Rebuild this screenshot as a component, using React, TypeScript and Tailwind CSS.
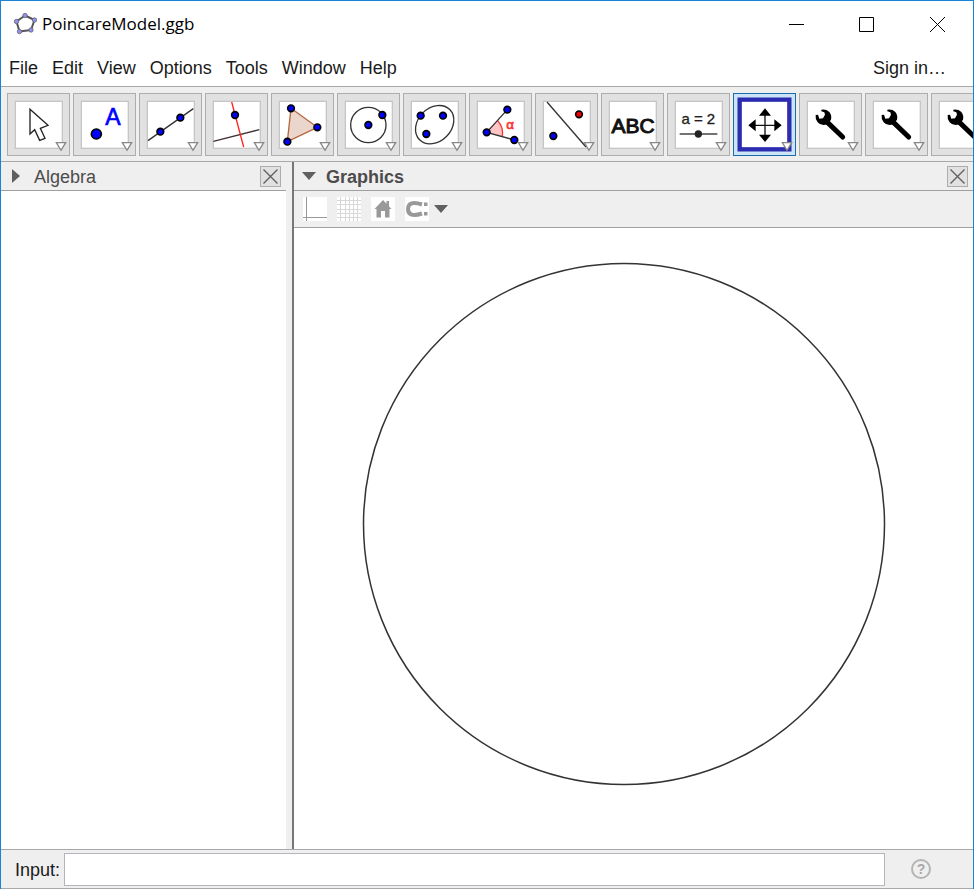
import React, { useState } from 'react';

type PointProps = { x: number; y: number; r?: number; fill?: string };

function Point({ x, y, r = 10, fill = '#0000ff' }: PointProps) {
  return <circle cx={x} cy={y} r={r} fill={fill} stroke="#000" strokeWidth="5" />;
}

function Wrench() {
  return (
    <g>
      <path d="M80 83 L131 132" stroke="#000" strokeWidth="15" strokeLinecap="round" />
      <path
        d="M67 50 Q82 48 91 57 Q99 67 96 80 L85 94 Q66 100 56 88 Q48 78 50 66 L57 65 L61 77 L72 76 L78 65 L76 58 L67 55 Z"
        fill="#000"
      />
    </g>
  );
}

const tools: { name: string; drawing: React.ReactNode }[] = [
  {
    name: 'Move',
    drawing: (
      <path
        d="M69 49 V123 L83 110 L98 142 L114 136 L100 106 L123 97 Z"
        fill="#fff"
        stroke="#222"
        strokeWidth="4"
      />
    ),
  },
  {
    name: 'Point',
    drawing: (
      <g>
        <Point x={70} y={123} r={15} />
        <text x="120" y="97" textAnchor="middle" fontSize="69" fill="#00f" stroke="#00f" strokeWidth="2">
          A
        </text>
      </g>
    ),
  },
  {
    name: 'Line',
    drawing: (
      <g>
        <path d="M27 143 L163 47" stroke="#333" strokeWidth="4" />
        <Point x={64} y={116} />
        <Point x={124} y={74} />
      </g>
    ),
  },
  {
    name: 'Perpendicular Line',
    drawing: (
      <g>
        <path d="M25 145 L163 110" stroke="#433" strokeWidth="4" />
        <path d="M80 27 L116 162" stroke="#f22" strokeWidth="4" />
        <Point x={90} y={66} />
      </g>
    ),
  },
  {
    name: 'Polygon',
    drawing: (
      <g>
        <path d="M60 46 L139 103 L49 146 Z" fill="#ebd6cc" stroke="#b5673f" strokeWidth="4" />
        <Point x={60} y={46} />
        <Point x={139} y={103} />
        <Point x={49} y={146} />
      </g>
    ),
  },
  {
    name: 'Circle with Center through Point',
    drawing: (
      <g>
        <circle cx="94" cy="96" r="53" fill="none" stroke="#333" strokeWidth="4" />
        <Point x={94} y={96} />
        <Point x={136} y={66} />
      </g>
    ),
  },
  {
    name: 'Ellipse',
    drawing: (
      <g>
        <ellipse
          cx="95"
          cy="95"
          rx="64"
          ry="50"
          transform="rotate(-45 95 95)"
          fill="none"
          stroke="#333"
          strokeWidth="4"
        />
        <Point x={53} y={68} />
        <Point x={120} y={68} />
        <Point x={70} y={123} />
      </g>
    ),
  },
  {
    name: 'Angle',
    drawing: (
      <g>
        <path d="M53 118 L86 83 Q104 103 100 130 Z" fill="#ffc4c4" />
        <path d="M86 83 Q104 103 100 130" fill="none" stroke="#f33" strokeWidth="4" />
        <path d="M115 50 L53 118 L136 141" fill="none" stroke="#333" strokeWidth="4" />
        <Point x={115} y={50} />
        <Point x={53} y={118} />
        <Point x={136} y={141} />
        <text x="123" y="108" textAnchor="middle" fontSize="40" fill="#f33" stroke="#f33" strokeWidth="2">
          α
        </text>
      </g>
    ),
  },
  {
    name: 'Reflect about Line',
    drawing: (
      <g>
        <path d="M36 27 L153 162" stroke="#333" strokeWidth="4" />
        <Point x={132} y={64} fill="#f00000" />
        <Point x={55} y={129} />
      </g>
    ),
  },
  {
    name: 'Text',
    drawing: (
      <text x="96" y="119" textAnchor="middle" fontSize="63" fill="#111" stroke="#111" strokeWidth="3">
        ABC
      </text>
    ),
  },
  {
    name: 'Slider',
    drawing: (
      <g>
        <text x="94" y="92" textAnchor="middle" fontSize="45" fill="#222" stroke="#222" strokeWidth="1">
          a = 2
        </text>
        <path d="M38 123 H151" stroke="#444" strokeWidth="4" />
        <circle cx="94" cy="123" r="11" fill="#222" />
      </g>
    ),
  },
  {
    name: 'Move Graphics View',
    drawing: (
      <g>
        <path d="M96 55 V137 M55 97 H137" stroke="#111" strokeWidth="4" />
        <path
          d="M96 46 L114 68 H78 Z M96 147 L114 125 H78 Z M46 97 L68 79 V115 Z M146 97 L124 79 V115 Z"
          fill="#000"
        />
      </g>
    ),
  },
  { name: 'Custom Tool 1', drawing: <Wrench /> },
  { name: 'Custom Tool 2', drawing: <Wrench /> },
  { name: 'Custom Tool 3', drawing: <Wrench /> },
];

function ToolButton({
  name,
  active,
  onSelect,
  children,
}: {
  name: string;
  active: boolean;
  onSelect: () => void;
  children: React.ReactNode;
}) {
  return (
    <button
      type="button"
      aria-label={name}
      aria-pressed={active}
      onClick={onSelect}
      className={
        active
          ? 'size-[63px] shrink-0 bg-[#cce4f7] outline-1 -outline-offset-1 outline-[#1a6cab]'
          : 'size-[63px] shrink-0 bg-[#e1e1e1] outline-1 -outline-offset-1 outline-[#adadad]'
      }
    >
      <svg viewBox="0 0 189 189" className="size-[63px]" aria-hidden="true">
        {active ? (
          <rect x="20" y="20" width="149" height="149" fill="#fff" stroke="#2c2cb0" strokeWidth="13" />
        ) : (
          <rect x="25" y="25" width="141" height="141" fill="#fff" stroke="#c6c6c6" strokeWidth="4" />
        )}
        {children}
        <path d="M148 149 H176 L162 172 Z" fill="#fff" stroke="#888" strokeWidth="4" />
      </svg>
    </button>
  );
}

function ClosePanel({ label }: { label: string }) {
  return (
    <button
      type="button"
      aria-label={label}
      className="grid size-[21px] place-items-center border border-[#adadad] bg-[#e1e1e1]"
    >
      <svg viewBox="0 0 17 17" className="size-[17px]" aria-hidden="true">
        <path d="M1.5 1.5 L15.5 15.5 M15.5 1.5 L1.5 15.5" stroke="#606060" strokeWidth="1.4" />
      </svg>
    </button>
  );
}

const menus = ['File', 'Edit', 'View', 'Options', 'Tools', 'Window', 'Help'];

export default function App() {
  const [selected, setSelected] = useState('Move Graphics View');

  return (
    <div className="flex h-screen flex-col overflow-hidden border border-b-0 border-[#1883d7] bg-[#efefef] font-['Liberation_Sans',Arial,sans-serif] text-lg text-[#1a1a1a]">
      <header className="flex h-[46px] shrink-0 items-center justify-between bg-white pl-3">
        <h1 className="flex items-center gap-1 font-['Open_Sans','Segoe_UI',sans-serif] text-[17px] text-black">
          <svg viewBox="0 0 25 24" className="h-6 w-[25px]" aria-hidden="true">
            <path
              d="M12 3.500 L21.500 8 L18 18 L6.500 19.500 L3.500 9.500 Z"
              fill="none"
              stroke="#555"
              strokeWidth="2"
              strokeLinejoin="round"
            />
            {[
              [12, 3.5],
              [21.5, 8],
              [18, 18],
              [6.5, 19.5],
              [3.5, 9.5],
            ].map(([x, y]) => (
              <circle key={x} cx={x} cy={y} r="2.2" fill="#9090f5" stroke="#666" strokeWidth="0.8" />
            ))}
          </svg>
          PoincareModel.ggb
        </h1>
        <div className="flex">
          <button type="button" aria-label="Minimize" className="grid h-11 w-[69px] place-items-center">
            <svg viewBox="0 0 15 15" className="size-[15px]" aria-hidden="true">
              <path d="M0 7.5 H15" stroke="#000" />
            </svg>
          </button>
          <button type="button" aria-label="Maximize" className="grid h-11 w-[71px] place-items-center">
            <svg viewBox="0 0 15 15" className="size-[15px]" aria-hidden="true">
              <path d="M0.500 0.500 H14.500 V14.500 H0.500 Z" fill="none" stroke="#000" />
            </svg>
          </button>
          <button type="button" aria-label="Close" className="grid h-11 w-[71px] place-items-center">
            <svg viewBox="0 0 15 15" className="size-[15px]" aria-hidden="true">
              <path d="M0 0 L15 15 M15 0 L0 15" stroke="#000" />
            </svg>
          </button>
        </div>
      </header>

      <nav className="flex h-[39px] shrink-0 items-center justify-between bg-white pt-[3px] pr-[27px] pl-2">
        <div className="flex gap-[14px]">
          {menus.map((menu) => (
            <button key={menu} type="button">
              {menu}
            </button>
          ))}
        </div>
        <button type="button">Sign in…</button>
      </nav>

      <div className="flex h-[76px] shrink-0 gap-[3px] overflow-hidden border-y border-[#a8a8a8] pt-[6px] pl-[6px]">
        {tools.map((tool) => (
          <ToolButton
            key={tool.name}
            name={tool.name}
            active={tool.name === selected}
            onSelect={() => setSelected(tool.name)}
          >
            {tool.drawing}
          </ToolButton>
        ))}
      </div>

      <main className="flex min-h-0 flex-1">
        <section className="flex w-[285px] shrink-0 flex-col bg-white">
          <div className="flex h-[29px] shrink-0 items-center border-b border-[#a0a0a0] bg-[#efefef] pr-[5px] pl-[10px] text-[#4c4c4c]">
            <svg viewBox="0 0 9 14" className="h-[14px] w-[9px]" aria-hidden="true">
              <path d="M1 0 L9 7 L1 14 Z" fill="#606060" />
            </svg>
            <h2 className="flex-1 pt-[2px] pl-[14px]">Algebra</h2>
            <ClosePanel label="Close Algebra" />
          </div>
        </section>
        <div className="w-2 shrink-0 border-r-2 border-[#777] bg-[#efefef]" />
        <section className="flex min-w-0 flex-1 flex-col bg-white">
          <div className="flex h-[29px] shrink-0 items-center border-b border-[#a0a0a0] bg-[#efefef] pr-[5px] pl-2 text-[#4c4c4c]">
            <svg viewBox="0 0 14 8" className="h-2 w-[14px]" aria-hidden="true">
              <path d="M0 0 H14 L7 8 Z" fill="#606060" />
            </svg>
            <h2 className="flex-1 pt-[2px] pl-[10px] font-bold">Graphics</h2>
            <ClosePanel label="Close Graphics" />
          </div>
          <div className="flex h-[37px] shrink-0 items-center border-b border-[#a0a0a0] bg-[#efefef] pl-[9px]">
            <button type="button" aria-label="Show axes" className="mr-[10px] size-6 bg-white">
              <svg viewBox="0 0 24 24" className="size-6" aria-hidden="true">
                <path d="M3.500 0 V24 M0 20.500 H24" stroke="#999" />
              </svg>
            </button>
            <button type="button" aria-label="Show grid" className="mr-[10px] size-6 bg-white">
              <svg viewBox="0 0 24 24" className="size-6" aria-hidden="true">
                <path
                  d="M3.500 0 V24 M8.500 0 V24 M12.500 0 V24 M16.500 0 V24 M20.500 0 V24 M0 3.500 H24 M0 7.500 H24 M0 12.500 H24 M0 16.500 H24 M0 20.500 H24"
                  stroke="#d8d8d8"
                />
              </svg>
            </button>
            <button type="button" aria-label="Standard view" className="mr-[10px] size-6 bg-white">
              <svg viewBox="0 0 24 24" className="size-6" aria-hidden="true">
                <path
                  d="M12 3 L20.500 12 H18.500 V20.500 H14 V14 H10 V20.500 H5.500 V12 H3.500 L12 3 M15.500 4 H18 V9 H15.500 Z"
                  fill="#999"
                />
              </svg>
            </button>
            <button type="button" aria-label="Point capturing" className="flex items-center gap-[5px]">
              <svg viewBox="0 0 24 24" className="size-6 bg-white" aria-hidden="true">
                <path
                  d="M17 7.500 C8 4.500 3 6 3 12 C3 18 8 19.500 17 16.500"
                  fill="none"
                  stroke="#999"
                  strokeWidth="4"
                />
                <path d="M19 5.500 H22.500 V9 H19 Z M19 15 H22.500 V18.500 H19 Z" fill="#999" />
              </svg>
              <svg viewBox="0 0 14 8" className="h-2 w-[14px]" aria-hidden="true">
                <path d="M0 0 H14 L7 8 Z" fill="#606060" />
              </svg>
            </button>
          </div>
          <div className="min-h-0 flex-1 overflow-hidden pt-[34px] pl-[68px]">
            <svg viewBox="0 0 524 524" className="size-[524px]" role="img" aria-label="Circle">
              <circle cx="262" cy="262" r="260.500" fill="none" stroke="#333" strokeWidth="1.500" />
            </svg>
          </div>
        </section>
      </main>

      <footer className="flex h-10 shrink-0 items-center border-t border-b border-[#a8a8a8] pr-[42px] pl-[14px]">
        <label htmlFor="command" className="pt-[2px]">
          Input:
        </label>
        <input
          id="command"
          type="text"
          className="ml-1 h-[33px] min-w-0 flex-1 border border-[#b4b4bc] bg-white px-1 outline-none"
        />
        <button
          type="button"
          aria-label="Input help"
          className="ml-[26px] grid size-5 place-items-center rounded-full border-2 border-[#b4b4b4] text-sm leading-none font-bold text-[#a8a8a8]"
        >
          ?
        </button>
      </footer>
    </div>
  );
}
